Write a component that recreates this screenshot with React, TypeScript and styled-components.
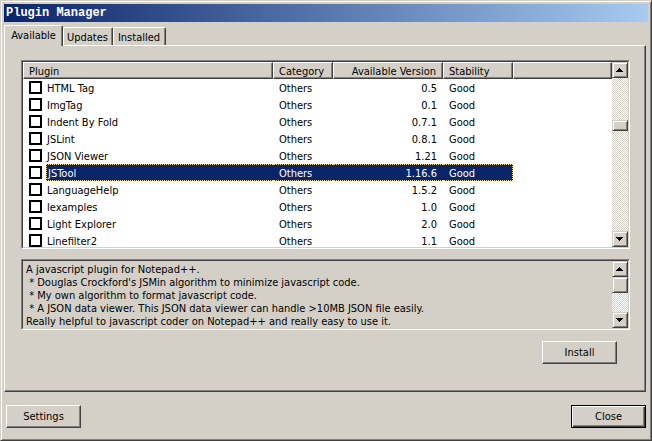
import React, { useState } from "react";
import styled, { createGlobalStyle, css } from "styled-components";

const face = "#d4d0c8";
const light = "#ffffff";
const shadow = "#808080";
const dark = "#404040";
const navy = "#0a246a";
const sky = "#a6caf0";
const focus = "#f5db95";

const GlobalStyle = createGlobalStyle`
  *, *::before, *::after { box-sizing: border-box; }
  body { margin: 0; background: ${face}; }
  body, button, input, textarea, table {
    font-family: "DejaVu Sans Condensed", "Noto Sans", sans-serif;
    font-size: 11px;
    line-height: 13px;
    color: #000;
  }
`;

const raised = css`
  border: 1px solid;
  border-color: ${light} ${dark} ${dark} ${light};
  box-shadow: inset -1px -1px 0 ${shadow};
`;

const softRaised = css`
  border: 1px solid;
  border-color: ${face} ${dark} ${dark} ${face};
  box-shadow: inset 1px 1px 0 ${light}, inset -1px -1px 0 ${shadow};
`;

const Window = styled.main`
  display: flex;
  flex-direction: column;
  height: 100vh;
  min-height: 360px;
  padding: 3px;
  background: ${face};
  ${softRaised}
`;

const TitleBar = styled.header`
  display: flex;
  align-items: center;
  height: 18px;
  padding: 1px 2px 0;
  background: linear-gradient(to right, ${navy}, ${sky});
`;

const Title = styled.h1`
  margin: 0;
  font: bold 12px/17px "Liberation Mono", monospace;
  color: #fff;
`;

const Tabs = styled.div`
  display: flex;
  align-items: flex-end;
  height: 23px;
`;

const Tab = styled.button<{ $active: boolean; $width: number }>`
  min-width: ${(p) => p.$width}px;
  height: ${(p) => (p.$active ? 21 : 18)}px;
  margin-bottom: ${(p) => (p.$active ? -1 : 0)}px;
  padding: ${(p) => (p.$active ? "0 1px 1px 1px" : "2px 1px 0 0")};
  background: ${face};
  border: 1px solid;
  border-color: ${light} ${dark} transparent ${light};
  border-bottom: 0;
  border-radius: 2px 2px 0 0;
  box-shadow: inset -1px 0 0 ${shadow};
  z-index: ${(p) => (p.$active ? 1 : 0)};
`;

const Panel = styled.section`
  display: flex;
  flex: 1;
  flex-direction: column;
  min-height: 0;
  margin-right: 2px;
  padding: 14px 15px 27px 16px;
  ${raised}
`;

const Sunken = styled.div`
  display: flex;
  border: 1px solid;
  border-color: ${shadow} ${light} ${light} ${shadow};
`;

const SunkenInner = styled.div<{ $fill: string }>`
  display: flex;
  flex: 1;
  min-width: 0;
  border: 1px solid;
  border-color: ${dark} ${face} ${face} ${dark};
  background: ${(p) => p.$fill};
`;

const ListFrame = styled(Sunken)`
  flex: 1;
  min-height: 0;
`;

const ListView = styled.div`
  flex: 1;
  min-width: 0;
  overflow: hidden;
`;

const Table = styled.table`
  width: 100%;
  table-layout: fixed;
  border-collapse: separate;
  border-spacing: 0;
`;

const Col = styled.col<{ $width?: number }>`
  width: ${(p) => (p.$width ? `${p.$width}px` : "auto")};
`;

const HeadCell = styled.th<{ $right?: boolean }>`
  height: 17px;
  padding: 2px 6px 0 5px;
  background: ${face};
  ${raised}
  font-weight: normal;
  text-align: ${(p) => (p.$right ? "right" : "left")};
  white-space: nowrap;
`;

const Row = styled.tr<{ $selected: boolean }>`
  ${(p) =>
    p.$selected &&
    css`
      color: #fff;
      td:nth-child(n + 2):nth-child(-n + 5) {
        background: ${navy};
        border-top: 1px dotted ${focus};
        border-bottom: 1px dotted ${focus};
      }
      td:nth-child(2) { border-left: 1px dotted ${focus}; padding-left: 1px; }
      td:nth-child(5) { border-right: 1px dotted ${focus}; }
    `}
`;

const cellPadding = { tick: "0 0 0 6px", name: "2px 1px 0", text: "2px 6px 0" };

const Cell = styled.td<{ $kind?: "tick" | "name" | "text"; $right?: boolean }>`
  height: 17px;
  padding: ${(p) => cellPadding[p.$kind ?? "text"]};
  text-align: ${(p) => (p.$right ? "right" : "left")};
  white-space: nowrap;
  line-height: 13px;
`;

const Tick = styled.input`
  appearance: none;
  display: block;
  width: 13px;
  height: 13px;
  margin: 0;
  border: 2px solid #000;
  background: #fff;
  &:checked { box-shadow: inset 0 0 0 2px #fff; background: #000; }
`;

const Bar = styled.div`
  display: flex;
  flex-direction: column;
  width: 16px;
  background: repeating-conic-gradient(${light} 0 25%, ${face} 0 50%) 0 0 / 2px 2px;
`;

const Track = styled.div<{ $grow: number }>`
  flex: ${(p) => p.$grow} 1 0;
`;

const Thumb = styled.div<{ $height: number }>`
  height: ${(p) => p.$height}px;
  background: ${face};
  ${softRaised}
`;

const Arrow = styled.button`
  display: flex;
  width: 16px;
  height: 16px;
  padding: 0;
  background: ${face};
  ${softRaised}
  svg { display: block; }
`;

const DescriptionFrame = styled(Sunken)`
  height: 71px;
  margin-top: 10px;
`;

const Description = styled.textarea`
  flex: 1;
  min-width: 0;
  padding: 2px 3px 0;
  border: 0;
  outline: 0;
  resize: none;
  overflow: hidden;
  background: transparent;
`;

const PushButton = styled.button<{ $primary?: boolean }>`
  width: 75px;
  height: 23px;
  padding: 0;
  background: ${face};
  ${raised}
  ${(p) =>
    p.$primary &&
    css`
      border-color: #000;
      box-shadow: inset 1px 1px 0 ${light}, inset -1px -1px 0 ${dark}, inset -2px -2px 0 ${shadow};
    `}
`;

const PanelActions = styled.div`
  display: flex;
  justify-content: flex-end;
  margin-top: 11px;
  padding-right: 13px;
`;

const Footer = styled.footer`
  display: flex;
  justify-content: space-between;
  padding: 13px 2px 9px;
`;

type Plugin = { name: string; version: string };

const plugins: Plugin[] = [
  { name: "HTML Tag", version: "0.5" },
  { name: "ImgTag", version: "0.1" },
  { name: "Indent By Fold", version: "0.7.1" },
  { name: "JSLint", version: "0.8.1" },
  { name: "JSON Viewer", version: "1.21" },
  { name: "JSTool", version: "1.16.6" },
  { name: "LanguageHelp", version: "1.5.2" },
  { name: "lexamples", version: "1.0" },
  { name: "Light Explorer", version: "2.0" },
  { name: "Linefilter2", version: "1.1" },
];

const description = [
  "A javascript plugin for Notepad++.",
  " * Douglas Crockford's JSMin algorithm to minimize javascript code.",
  " * My own algorithm to format javascript code.",
  " * A JSON data viewer. This JSON data viewer can handle >10MB JSON file easily.",
  "Really helpful to javascript coder on Notepad++ and really easy to use it.",
].join("\n");

const tabs = [
  { name: "Available", width: 59 },
  { name: "Updates", width: 50 },
  { name: "Installed", width: 53 },
];

function ArrowButton({ up }: { up?: boolean }) {
  return (
    <Arrow type="button" aria-label={up ? "Scroll up" : "Scroll down"}>
      <svg width="14" height="14" viewBox="1 1 14 14" shapeRendering="crispEdges">
        <path d={up ? "M7 6h1v1h1v1h1v1h1v1H4V9h1V8h1V7h1z" : "M4 6h7v1h-1v1H9v1H8v1H7V9H6V8H5V7H4z"} />
      </svg>
    </Arrow>
  );
}

function ScrollBar({ before, thumb, after }: { before: number; thumb: number; after: number }) {
  return (
    <Bar>
      <ArrowButton up />
      {before > 0 && <Track $grow={before} />}
      <Thumb $height={thumb} />
      <Track $grow={after} />
      <ArrowButton />
    </Bar>
  );
}

export default function App() {
  const [tab, setTab] = useState("Available");
  const [selected, setSelected] = useState("JSTool");

  return (
    <>
      <GlobalStyle />
      <Window>
        <TitleBar>
          <Title>Plugin Manager</Title>
        </TitleBar>
        <Tabs role="tablist">
          {tabs.map(({ name, width }) => (
            <Tab
              key={name}
              type="button"
              role="tab"
              aria-selected={tab === name}
              $active={tab === name}
              $width={width}
              onClick={() => setTab(name)}
            >
              {name}
            </Tab>
          ))}
        </Tabs>
        <Panel role="tabpanel">
          <ListFrame>
            <SunkenInner $fill="#fff">
              <ListView>
                <Table>
                  <colgroup>
                    <Col $width={23} />
                    <Col $width={227} />
                    <Col $width={60} />
                    <Col $width={110} />
                    <Col $width={70} />
                    <Col />
                  </colgroup>
                  <thead>
                    <tr>
                      <HeadCell colSpan={2}>Plugin</HeadCell>
                      <HeadCell>Category</HeadCell>
                      <HeadCell $right>Available Version</HeadCell>
                      <HeadCell>Stability</HeadCell>
                      <HeadCell aria-hidden="true" />
                    </tr>
                  </thead>
                  <tbody>
                    {plugins.map(({ name, version }) => (
                      <Row key={name} $selected={name === selected} onClick={() => setSelected(name)}>
                        <Cell $kind="tick">
                          <Tick type="checkbox" id={`pick-${name}`} />
                        </Cell>
                        <Cell $kind="name">
                          <label htmlFor={`pick-${name}`}>{name}</label>
                        </Cell>
                        <Cell>Others</Cell>
                        <Cell $right>{version}</Cell>
                        <Cell>Good</Cell>
                        <Cell />
                      </Row>
                    ))}
                  </tbody>
                </Table>
              </ListView>
              <ScrollBar before={42} thumb={11} after={100} />
            </SunkenInner>
          </ListFrame>
          <DescriptionFrame>
            <SunkenInner $fill={face}>
              <Description readOnly aria-label="Plugin description" value={description} />
              <ScrollBar before={0} thumb={16} after={19} />
            </SunkenInner>
          </DescriptionFrame>
          <PanelActions>
            <PushButton type="button">Install</PushButton>
          </PanelActions>
        </Panel>
        <Footer>
          <PushButton type="button">Settings</PushButton>
          <PushButton type="button" $primary>
            Close
          </PushButton>
        </Footer>
      </Window>
    </>
  );
}
